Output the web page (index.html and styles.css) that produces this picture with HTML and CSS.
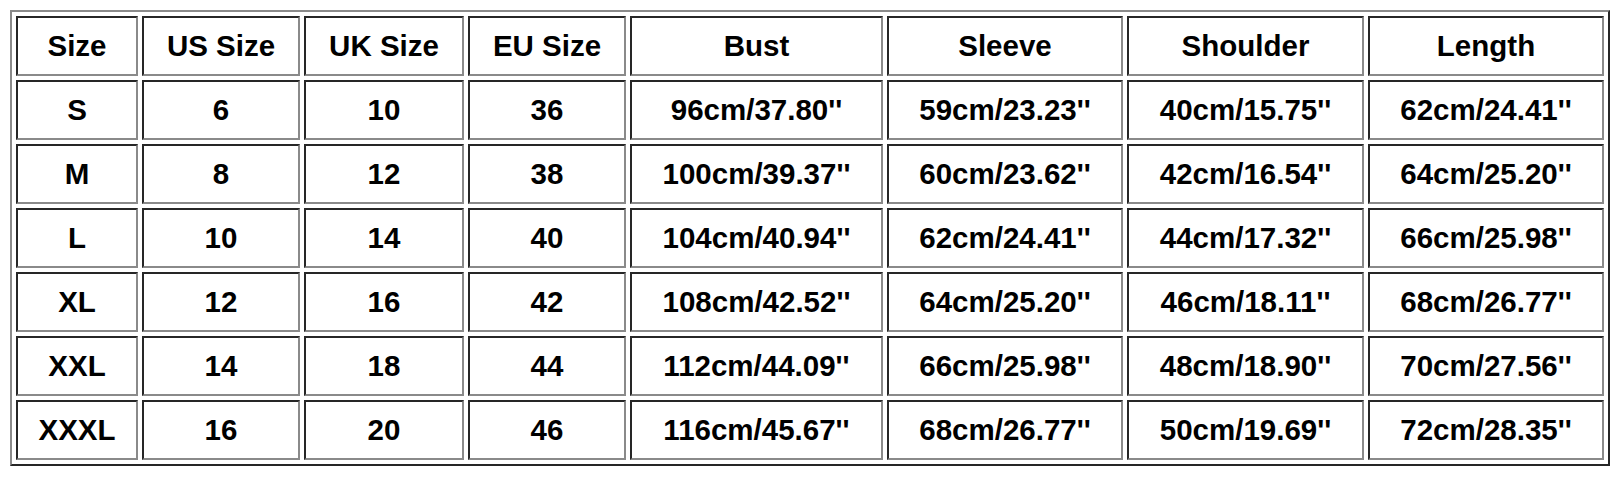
FILE: index.html
```html
<!DOCTYPE html>
<html>
<head>
<meta charset="utf-8">
<link rel="stylesheet" href="styles.css">
</head>
<body>
<table class="size-table">
  <colgroup>
    <col class="c1"><col class="c2"><col class="c3"><col class="c4"><col class="c5"><col class="c6"><col class="c7"><col class="c8">
  </colgroup>
  <tr><th>Size</th><th>US Size</th><th>UK Size</th><th>EU Size</th><th>Bust</th><th>Sleeve</th><th>Shoulder</th><th>Length</th></tr>
  <tr><td>S</td><td>6</td><td>10</td><td>36</td><td>96cm/37.80''</td><td>59cm/23.23''</td><td>40cm/15.75''</td><td>62cm/24.41''</td></tr>
  <tr><td>M</td><td>8</td><td>12</td><td>38</td><td>100cm/39.37''</td><td>60cm/23.62''</td><td>42cm/16.54''</td><td>64cm/25.20''</td></tr>
  <tr><td>L</td><td>10</td><td>14</td><td>40</td><td>104cm/40.94''</td><td>62cm/24.41''</td><td>44cm/17.32''</td><td>66cm/25.98''</td></tr>
  <tr><td>XL</td><td>12</td><td>16</td><td>42</td><td>108cm/42.52''</td><td>64cm/25.20''</td><td>46cm/18.11''</td><td>68cm/26.77''</td></tr>
  <tr><td>XXL</td><td>14</td><td>18</td><td>44</td><td>112cm/44.09''</td><td>66cm/25.98''</td><td>48cm/18.90''</td><td>70cm/27.56''</td></tr>
  <tr><td>XXXL</td><td>16</td><td>20</td><td>46</td><td>116cm/45.67''</td><td>68cm/26.77''</td><td>50cm/19.69''</td><td>72cm/28.35''</td></tr>
</table>
</body>
</html>
```
FILE: styles.css
```css
html, body {
  margin: 0;
  padding: 0;
  background: #ffffff;
}
body {
  padding: 10px;
  font-family: "Liberation Sans", Arial, sans-serif;
  color: #000;
}
.size-table {
  width: 1600px;
  table-layout: fixed;
  border-collapse: separate;
  border-spacing: 4px;
  border-style: solid;
  border-width: 2px;
  border-color: #8a8a8a #262626 #262626 #8a8a8a;
}
.c1 { width: 122px; }
.c2 { width: 158px; }
.c3 { width: 160px; }
.c4 { width: 158px; }
.c5 { width: 253px; }
.c6 { width: 236px; }
.c7 { width: 237px; }
.c8 { width: 236px; }
.size-table tr { height: 60px; }
.size-table th,
.size-table td {
  box-sizing: border-box;
  height: 60px;
  padding: 0;
  text-align: center;
  vertical-align: middle;
  font-weight: bold;
  font-size: 29.5px;
  border-style: solid;
  border-width: 2px;
  border-color: #262626 #8a8a8a #8a8a8a #262626;
  white-space: nowrap;
}
```
